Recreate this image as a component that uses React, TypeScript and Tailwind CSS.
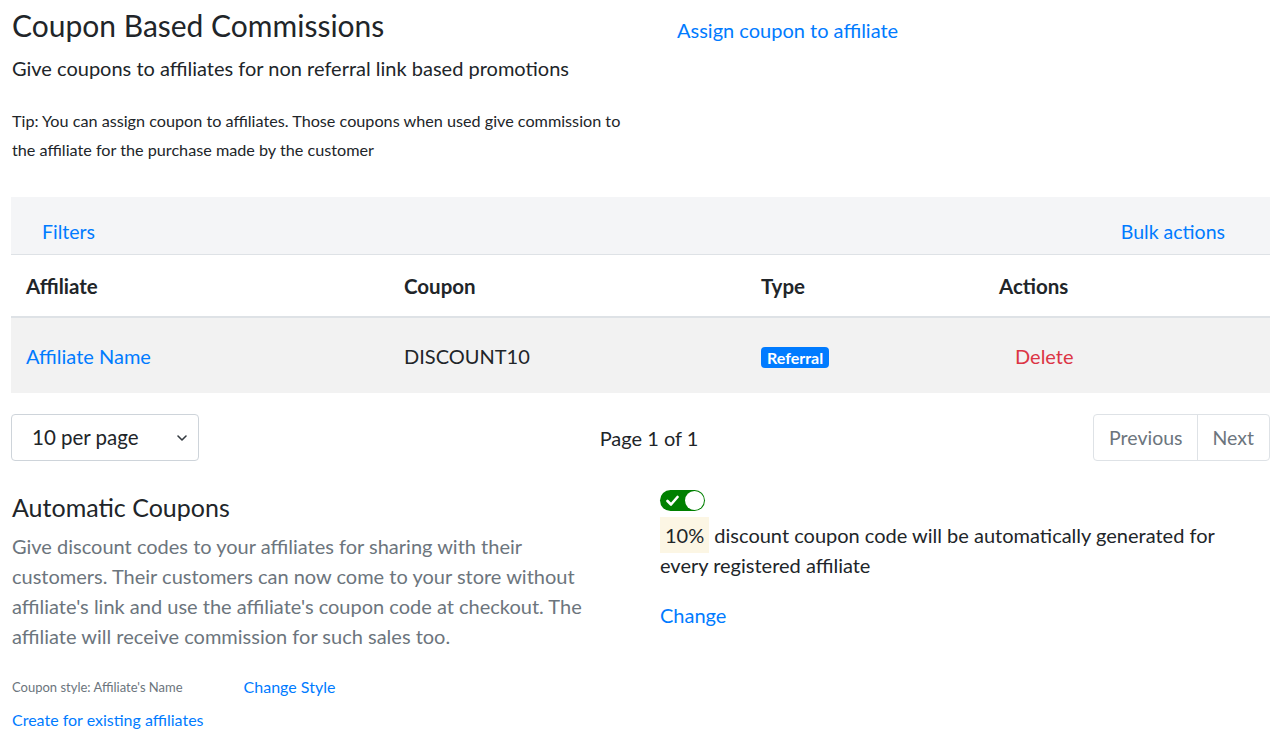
import React from "react";

const font = { fontFamily: "Lato, 'Liberation Sans', sans-serif" };

function Toggle() {
    return (
        <div className="relative w-[45px] h-[21px] rounded-full bg-[#008000]">
            <svg className="absolute left-[6px] top-[5px]" width="13" height="12" viewBox="0 0 13 12">
                <path d="M1.5 6 L5 9.5 L11.5 2" fill="none" stroke="#fff" strokeWidth="2.6" strokeLinecap="round" strokeLinejoin="round" />
            </svg>
            <div className="absolute right-[1px] top-[1px] w-[19px] h-[19px] rounded-full bg-white" />
        </div>
    );
}

export default function App() {
    return (
        <div className="w-[1281px] min-h-[737px] bg-white text-[#212529] px-[11px]" style={font}>
            {/* Header */}
            <div className="flex">
                <div className="w-[649px] pl-[1px]">
                    <h3 className="text-[30px] leading-[38px] mt-[6px]">Coupon Based Commissions</h3>
                    <p className="text-[20px] leading-[26px] mt-[11px]">Give coupons to affiliates for non referral link based promotions</p>
                    <p className="text-[16.2px] leading-[29px] mt-[25px] w-[622px]">
                        Tip: You can assign coupon to affiliates. Those coupons when used give commission to the affiliate for the purchase made by the customer
                    </p>
                </div>
                <div className="pl-[17px] pt-[17px]">
                    <a className="text-[20px] leading-[26px] text-[#007bff]">Assign coupon to affiliate</a>
                </div>
            </div>

            {/* Table */}
            <div className="mt-[33px]">
                <div className="h-[58px] bg-[#f4f5f7] border-b border-[#dee2e6] flex justify-between px-[31px] pt-[23px]">
                    <a className="text-[19.5px] leading-[24px] text-[#007bff]">Filters</a>
                    <a className="text-[19.5px] leading-[24px] text-[#007bff] mr-[14px]">Bulk actions</a>
                </div>
                <div className="grid grid-cols-[378px_357px_238px_287px] h-[63px] items-center pt-[2px] border-b-2 border-[#dee2e6] font-bold text-[20.5px]">
                    <div className="pl-[15px]">Affiliate</div>
                    <div className="pl-[15px]">Coupon</div>
                    <div className="pl-[15px]">Type</div>
                    <div className="pl-[15px]">Actions</div>
                </div>
                <div className="grid grid-cols-[378px_357px_238px_287px] h-[75px] items-center pt-[1px] bg-[#f2f2f2] text-[20px]">
                    <div className="pl-[15px]"><a className="text-[#007bff]">Affiliate Name</a></div>
                    <div className="pl-[15px]">DISCOUNT10</div>
                    <div className="pl-[15px]">
                        <span className="inline-block bg-[#007bff] text-white font-bold text-[16px] leading-[21px] px-[6px] rounded-[4px]">Referral</span>
                    </div>
                    <div className="pl-[31px]"><a className="text-[#dc3545]">Delete</a></div>
                </div>
            </div>

            {/* Pagination */}
            <div className="mt-[21px] flex items-center justify-between">
                <div className="w-[188px] h-[47px] border border-[#ced4da] rounded-[4px] flex items-center justify-between pl-[20px] pr-[10px] text-[20.5px]">
                    <span>10 per page</span>
                    <svg width="12" height="8" viewBox="0 0 12 8">
                        <path d="M2 2 L6 6 L10 2" fill="none" stroke="#343a40" strokeWidth="1.6" strokeLinecap="round" strokeLinejoin="round" />
                    </svg>
                </div>
                <div className="text-[20px] ml-[6px]">Page 1 of 1</div>
                <div className="flex h-[47px] border border-[#dee2e6] rounded-[4px] text-[19.5px] text-[#6c757d]">
                    <div className="pl-[15px] pr-[14px] flex items-center border-r border-[#dee2e6]">Previous</div>
                    <div className="px-[15px] flex items-center">Next</div>
                </div>
            </div>

            {/* Automatic coupons */}
            <div className="flex mt-[29px]">
                <div className="w-[649px] pl-[1px]">
                    <h4 className="text-[25px] leading-[30px] mt-[2px]">Automatic Coupons</h4>
                    <p className="text-[20px] leading-[30px] text-[#6c757d] mt-[9px] w-[600px]">
                        Give discount codes to your affiliates for sharing with their customers. Their customers can now come to your store without affiliate's link and use the affiliate's coupon code at checkout. The affiliate will receive commission for such sales too.
                    </p>
                    <div className="flex items-center mt-[26px] text-[13px] leading-[20px]">
                        <span className="text-[#6c757d]">Coupon style: Affiliate's Name</span>
                        <a className="text-[#007bff] ml-[61px] text-[16px]">Change Style</a>
                    </div>
                    <a className="block text-[#007bff] text-[16px] leading-[20px] mt-[13px]">Create for existing affiliates</a>
                </div>
                <div className="w-[575px]">
                    <Toggle />
                    <p className="text-[20px] leading-[30px] mt-[9px]">
                        <span className="bg-[#fcf6e4] px-[5px] py-[6px]">10%</span> discount coupon code will be automatically generated for every registered affiliate
                    </p>
                    <a className="block text-[20px] leading-[26px] text-[#007bff] mt-[22px]">Change</a>
                </div>
            </div>
        </div>
    );
}
